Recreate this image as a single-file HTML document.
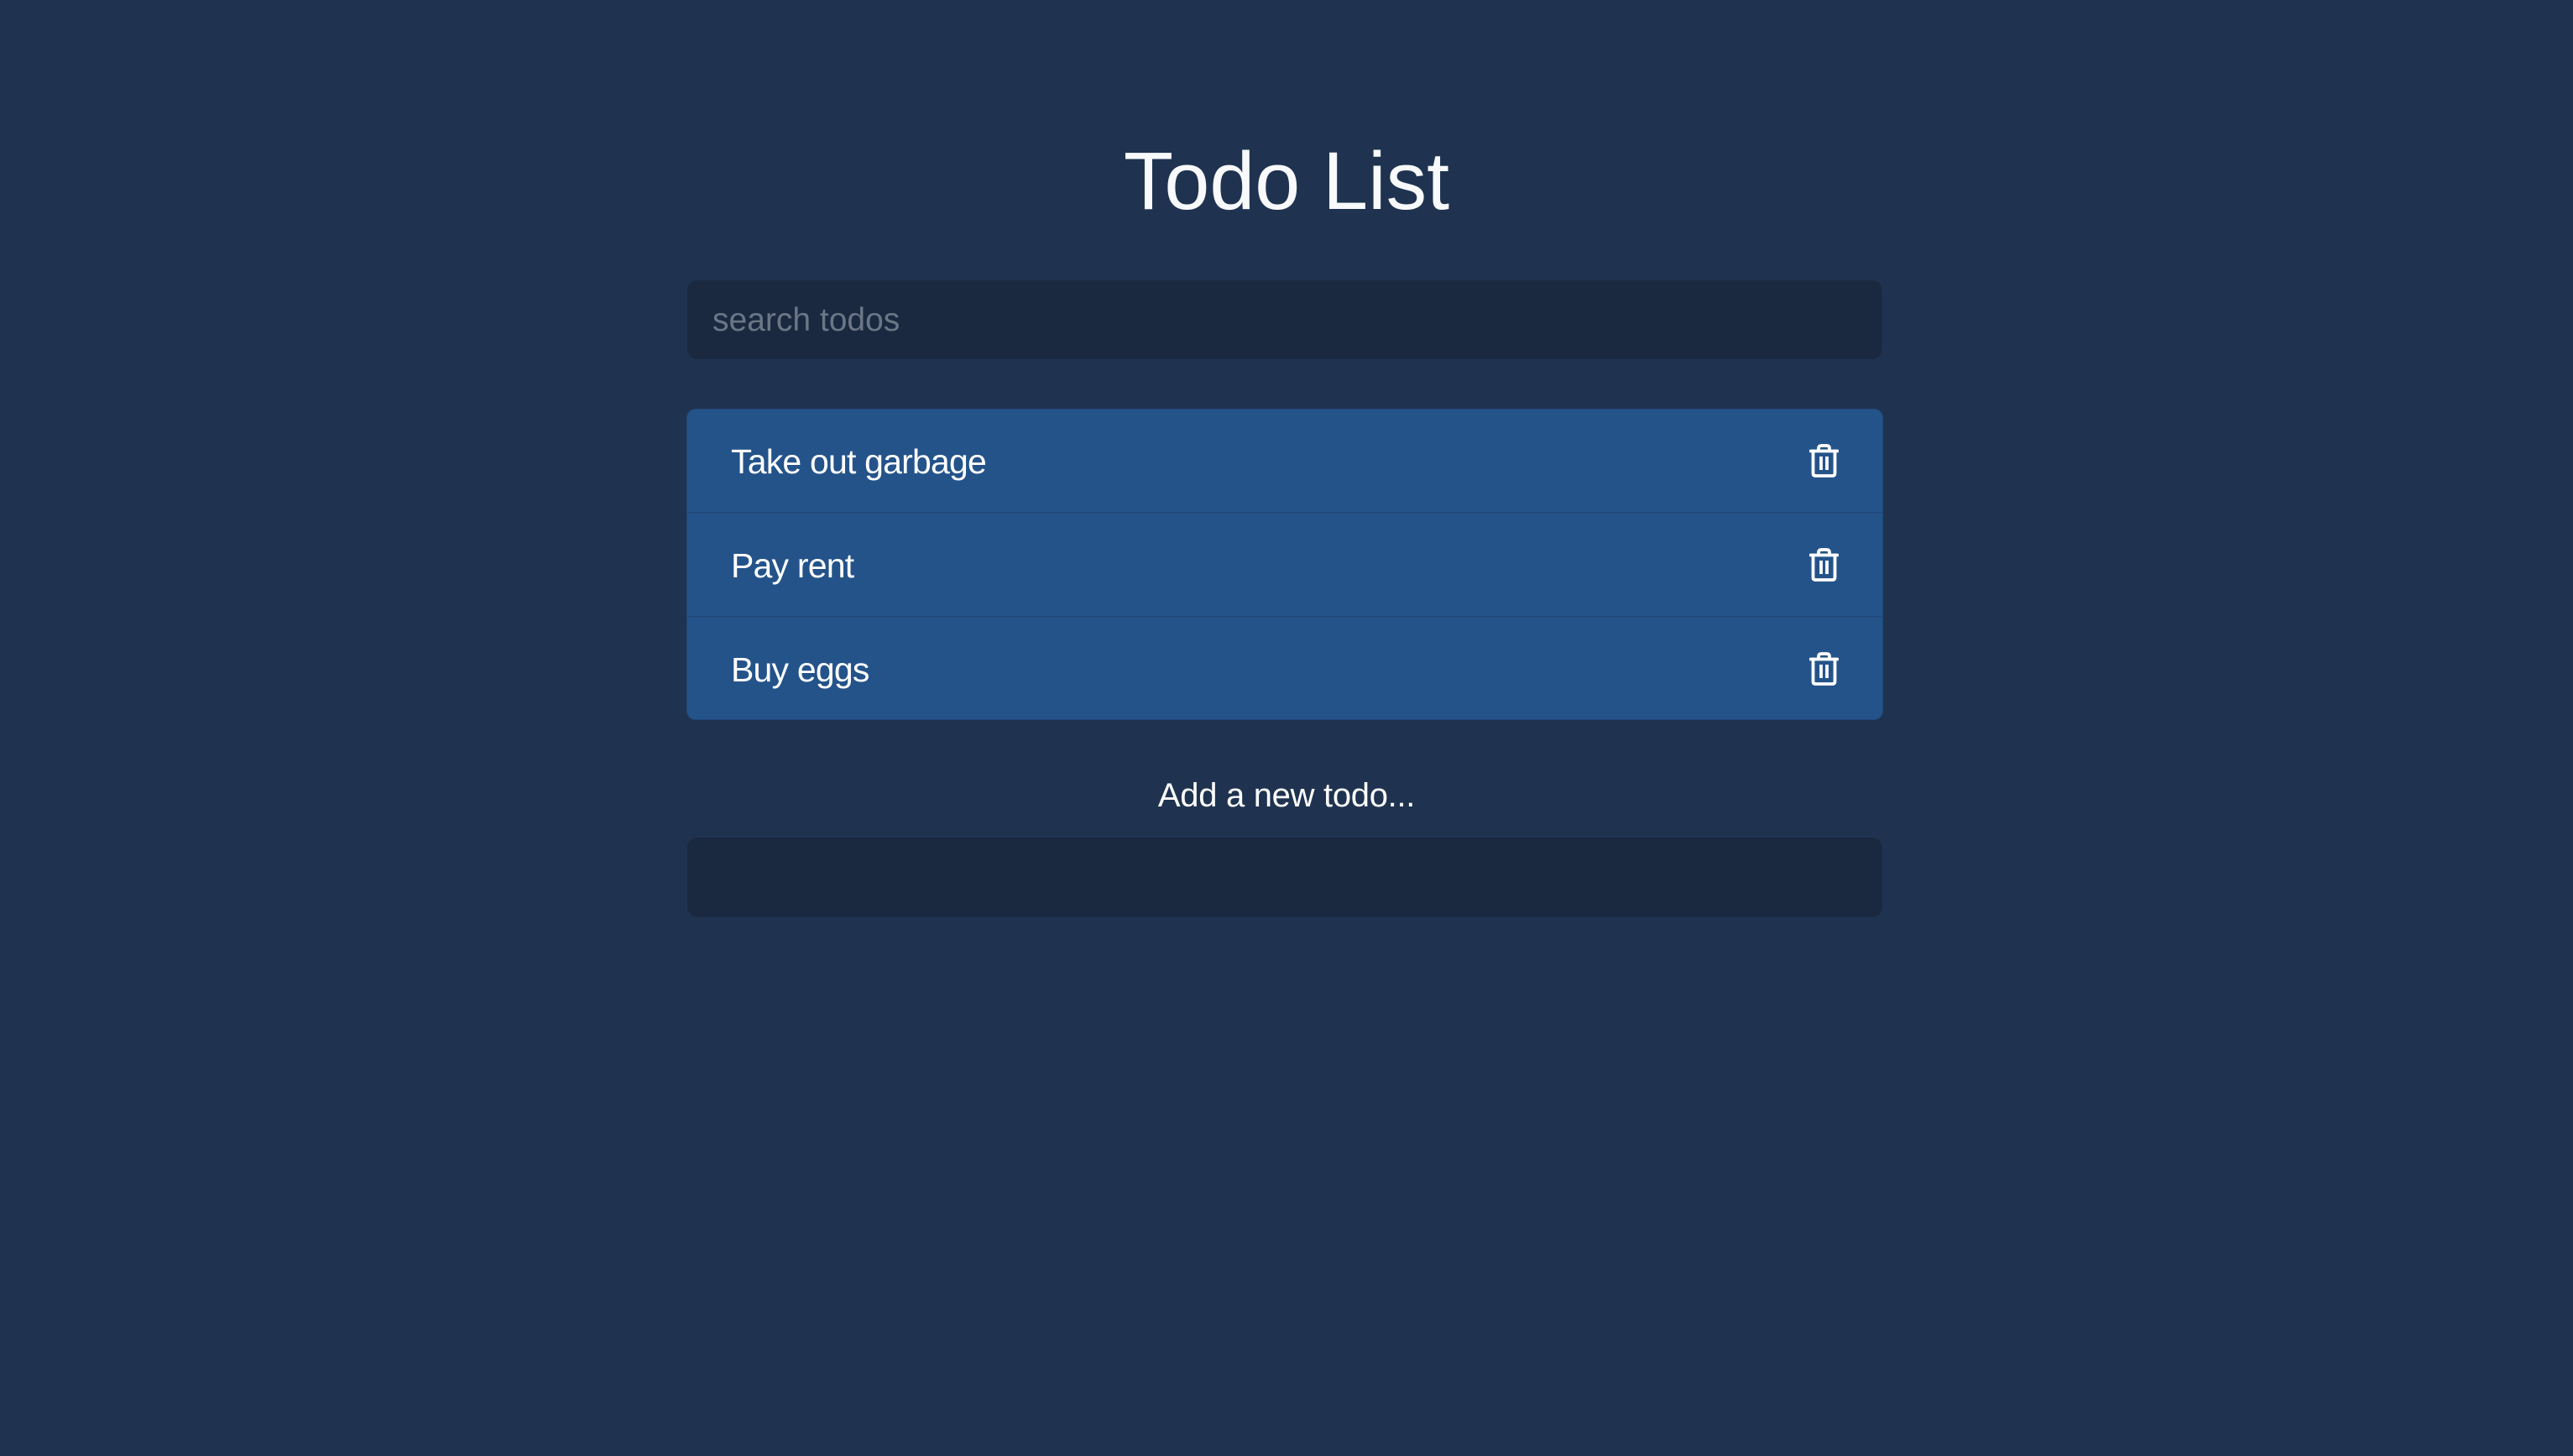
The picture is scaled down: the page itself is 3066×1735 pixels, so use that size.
<!DOCTYPE html>
<html><head><meta charset="utf-8"><style>
html,body{margin:0;padding:0;width:3066px;height:1735px;background:#1f3350;overflow:hidden;font-family:"Liberation Sans",sans-serif;}
.abs{position:absolute}
.title{left:0;width:3066px;text-align:center;top:167px;font-size:97px;line-height:97px;color:#f7f9fb;}
.search{left:819px;top:334px;width:1424px;height:94px;background:#1a2940;border-radius:12px;}
.search span{position:absolute;left:30px;top:1px;line-height:94px;font-size:39px;color:#6b7686;}
.list{left:819px;top:488px;width:1424px;height:369px;background:#24538a;border-radius:10px;box-shadow:0 0 0 1px #22497a;overflow:hidden;}
.row{position:absolute;left:0;width:1424px;height:122px;}
.row span{position:absolute;left:52px;top:1px;line-height:122px;font-size:41px;color:#fff;letter-spacing:-0.8px;}
.row svg{position:absolute;left:1337px;top:41px;}
.sep{position:absolute;left:0;width:1424px;height:2px;background:#204a7c;}
.add{left:0;width:3066px;text-align:center;top:928px;font-size:40px;line-height:40px;color:#fff;letter-spacing:-0.3px;}
.input{left:819px;top:998px;width:1424px;height:95px;background:#1a2940;border-radius:12px;}
</style></head><body>
<div class="abs title">Todo List</div>
<div class="abs search"><span>search todos</span></div>
<div class="abs list">
  <div class="row" style="top:0"><span>Take out garbage</span>
    <svg width="35" height="40" viewBox="0 0 35 40" fill="none" stroke="#fff" stroke-width="3.8" stroke-linecap="round" stroke-linejoin="round"><path d="M1.5 8.5H33.5"/><path d="M11 8V5.5Q11 2 14.5 2H20.5Q24 2 24 5.5V8"/><path d="M4.5 8.5V35Q4.5 38 7.5 38H27.5Q30.5 38 30.5 35V8.5"/><path d="M14 15V31M21 15V31" stroke-linecap="butt"/></svg></div>
  <div class="sep" style="top:122px"></div>
  <div class="row" style="top:124px"><span>Pay rent</span>
    <svg width="35" height="40" viewBox="0 0 35 40" fill="none" stroke="#fff" stroke-width="3.8" stroke-linecap="round" stroke-linejoin="round"><path d="M1.5 8.5H33.5"/><path d="M11 8V5.5Q11 2 14.5 2H20.5Q24 2 24 5.5V8"/><path d="M4.5 8.5V35Q4.5 38 7.5 38H27.5Q30.5 38 30.5 35V8.5"/><path d="M14 15V31M21 15V31" stroke-linecap="butt"/></svg></div>
  <div class="sep" style="top:246px"></div>
  <div class="row" style="top:248px"><span>Buy eggs</span>
    <svg width="35" height="40" viewBox="0 0 35 40" fill="none" stroke="#fff" stroke-width="3.8" stroke-linecap="round" stroke-linejoin="round"><path d="M1.5 8.5H33.5"/><path d="M11 8V5.5Q11 2 14.5 2H20.5Q24 2 24 5.5V8"/><path d="M4.5 8.5V35Q4.5 38 7.5 38H27.5Q30.5 38 30.5 35V8.5"/><path d="M14 15V31M21 15V31" stroke-linecap="butt"/></svg></div>
</div>
<div class="abs add">Add a new todo...</div>
<div class="abs input"></div>
</body></html>
